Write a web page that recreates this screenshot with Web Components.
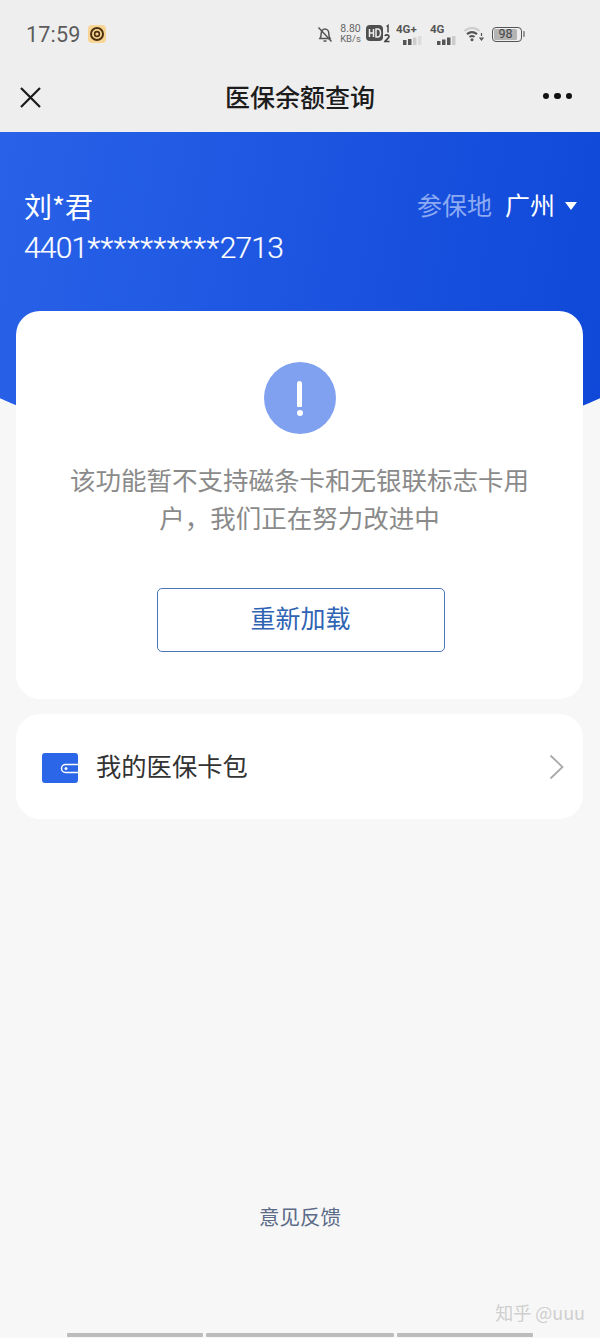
<!DOCTYPE html>
<html lang="zh">
<head>
<meta charset="utf-8">
<title>医保余额查询</title>
<style>
  html, body { margin: 0; padding: 0; }
  body {
    width: 600px;
    height: 1338px;
    overflow: hidden;
    background: #f7f7f7;
    font-family: "Noto Sans CJK SC", Roboto, sans-serif;
    display: flex;
    flex-direction: column;
  }
</style>
</head>
<body>
<status-bar time="17:59"></status-bar>
<nav-bar>医保余额查询</nav-bar>
<insured-hero name="刘*君" card-no="4401**********2713" city="广州"></insured-hero>
<notice-card action="重新加载">该功能暂不支持磁条卡和无银联标志卡用户，我们正在努力改进中</notice-card>
<wallet-row>我的医保卡包</wallet-row>
<feedback-link>意见反馈</feedback-link>
<gesture-bar></gesture-bar>

<script>
// Status bar
class StatusBar extends HTMLElement {
  constructor() {
    super();
    this.attachShadow({ mode: 'open' });
  }
  connectedCallback() {
    this.shadowRoot.innerHTML = `
      <style>
        :host { display: flex; align-items: center; height: 68px; padding: 0 75px 0 26px; background: #eeeeee; color: #555; font-family: Roboto, sans-serif; }
        .time { font-size: 21.5px; letter-spacing: .2px; color: #5c5c5c; width: 62px; }
        .right { margin-left: auto; display: flex; align-items: center; height: 24px; }
        .speed { font-size: 10.5px; line-height: 10px; text-align: center; margin-left: 6px; width: 23px; color: #666; }
        .speed small { font-size: 9.5px; }
        .net { display: flex; flex-direction: column; align-items: flex-start; width: 27px; font-size: 11.5px; font-weight: 700; line-height: 11px; color: #555; }
        svg { display: block; flex: none; }
        .batt { width: 30px; height: 15px; border: 1.500px solid #555; border-radius: 4px; box-sizing: border-box; padding: 1px; position: relative; margin: 0 3px 0 8px; }
        .batt i { display: block; width: 23px; height: 100%; border-radius: 1.500px; background: #b4b4b4; font: 400 12.500px/10px Roboto, sans-serif; color: #444; text-align: center; }
        .batt::after { content: ""; position: absolute; right: -4px; top: 3px; width: 2px; height: 6px; background: #999; border-radius: 0 1px 1px 0; }
      </style>
      <span class="time">${this.getAttribute('time')}</span>
      <svg width="18" height="18" viewBox="0 0 18 18">
        <rect width="18" height="18" rx="4" fill="#f8d594"/>
        <circle cx="9" cy="9" r="6" fill="none" stroke="#4a3011" stroke-width="2"/>
        <circle cx="9" cy="9" r="2.400" fill="none" stroke="#4a3011" stroke-width="1.600"/>
      </svg>
      <div class="right">
        <svg width="16" height="17" viewBox="0 0 16 17" fill="none" stroke="#555" stroke-width="1.500">
          <path d="M3 12.500c1-1.500 1.200-3 1.200-5 0-2.600 1.700-4.500 3.800-4.500s3.800 1.900 3.800 4.500c0 2 .2 3.500 1.200 5z"/>
          <path d="M6.500 15h3M1.500 1.500l13 14"/>
        </svg>
        <div class="speed">8.80<br><small>KB/s</small></div>
        <svg width="25" height="20" viewBox="0 0 25 20" style="margin-left:4px">
          <rect x="0" y="1" width="17" height="16" rx="4" fill="#4f4f4f"/>
          <path d="M3.500 5v8M3.500 9h4M7.500 5v8M10 5v8h1.500c2 0 3-1.500 3-4s-1-4-3-4z" fill="none" stroke="#eee" stroke-width="1.500"/>
          <path d="M20.500 2.500l1.500-1v7" fill="none" stroke="#444" stroke-width="1.500"/>
          <path d="M19 12c.3-1.500 4-1.500 4 .5 0 1.500-3 3-4 5h4.500" fill="none" stroke="#444" stroke-width="1.700"/>
        </svg>
        <div class="net" style="margin-left:5px">4G+
          <svg width="27" height="9" viewBox="0 0 27 9" style="margin-top:1px"><rect x="7" y="4" width="3.500" height="5" fill="#555"/><rect x="12" y="3" width="3.500" height="6" fill="#555"/><rect x="17" y="1.500" width="3.500" height="7.500" fill="#ccc"/><rect x="22" y="0" width="3.500" height="9" fill="#ddd"/></svg>
        </div>
        <div class="net" style="margin-left:7px">4G
          <svg width="27" height="9" viewBox="0 0 27 9" style="margin-top:1px"><rect x="7" y="5" width="3.500" height="4" fill="#555"/><rect x="12" y="3.500" width="3.500" height="5.500" fill="#555"/><rect x="17" y="1.500" width="3.500" height="7.500" fill="#555"/><rect x="22" y="0" width="3.500" height="9" fill="#ccc"/></svg>
        </div>
        <svg width="20" height="15" viewBox="0 0 20 15" fill="none" style="margin-left:7px">
          <path d="M0.500 4c4.500-4 10.500-4 15 0" stroke="#ccc" stroke-width="2.200"/>
          <path d="M3 7.200c3-2.500 7-2.500 10 0" stroke="#555" stroke-width="2.200"/>
          <path d="M5.500 10c1.600-1.200 3.400-1.200 5 0" stroke="#555" stroke-width="2"/>
          <circle cx="8" cy="12.800" r="1.500" fill="#555"/>
          <path d="M17.500 6v3M16 11h3l-1.500 2z" stroke="#555" stroke-width="1.200"/>
        </svg>
        <div class="batt"><i>98</i></div>
      </div>
    `;
  }
}
customElements.define('status-bar', StatusBar);

// Title bar
class NavBar extends HTMLElement {
  constructor() {
    super();
    this.attachShadow({ mode: 'open' }).innerHTML = `
      <style>
        :host { display: grid; grid-template-columns: 100px 1fr 100px; align-items: center; height: 64px; background: #eeeeee; color: #1c1c1c; }
        .close { padding-left: 20px; }
        h1 { margin: 0 0 8px; text-align: center; font-size: 25px; font-weight: 500; line-height: 50px; }
        .more { display: flex; justify-content: flex-end; gap: 5px; padding: 0 28px 8px 0; }
        .more i { width: 6.500px; height: 6.500px; border-radius: 50%; background: #111; }
        svg { display: block; margin-bottom: 6px; }
      </style>
      <div class="close">
        <svg width="21" height="21" viewBox="0 0 21 21" fill="none" stroke="#1a1a1a" stroke-width="2.200"><path d="M1 1l19 19M20 1L1 20"/></svg>
      </div>
      <h1><slot></slot></h1>
      <div class="more"><i></i><i></i><i></i></div>
    `;
  }
}
customElements.define('nav-bar', NavBar);

// Blue header with the insured person
class InsuredHero extends HTMLElement {
  constructor() {
    super();
    this.attachShadow({ mode: 'open' });
  }
  connectedCallback() {
    // digits sit closer together than the stars in the card number
    const cardNo = this.getAttribute('card-no').replace(/\*+/, '<span class="stars">$&</span>');
    this.shadowRoot.innerHTML = `
      <style>
        :host { display: block; position: relative; height: 179px; color: #fff; }
        .bg { position: absolute; left: 0; top: 0; width: 600px; height: 327px; background: linear-gradient(100deg, #2962e8 0%, #0f47d8 100%); clip-path: ellipse(500px 304px at 300px 23px); }
        .row { position: relative; display: flex; justify-content: space-between; padding: 55px 23px 0 24px; }
        .name { font-size: 28px; line-height: 38px; }
        .no { font: 300 30px/42px Roboto, sans-serif; margin-top: 2px; letter-spacing: -.8px; -webkit-text-stroke: .2px #fff; }
        .stars { letter-spacing: .5px; }
        .city { display: flex; align-items: center; height: 36px; font-size: 25px; margin-top: -1px; }
        .label { color: #8caaf2; margin-right: 13px; }
        .arrow { width: 0; height: 0; margin: 4px 0 0 10px; border: 6.500px solid transparent; border-top: 8px solid #fff; border-bottom: 0; }
      </style>
      <div class="bg"></div>
      <div class="row">
        <div>
          <div class="name">${this.getAttribute('name')}</div>
          <div class="no">${cardNo}</div>
        </div>
        <div class="city"><span class="label">参保地</span><span>${this.getAttribute('city')}</span><span class="arrow"></span></div>
      </div>
    `;
  }
}
customElements.define('insured-hero', InsuredHero);

// Message card with the reload button
class NoticeCard extends HTMLElement {
  constructor() {
    super();
    this.attachShadow({ mode: 'open' });
  }
  connectedCallback() {
    this.shadowRoot.innerHTML = `
      <style>
        :host { display: flex; flex-direction: column; align-items: center; position: relative; box-sizing: border-box; width: 567px; height: 388px; margin-left: 16px; padding-top: 51px; background: #fff; border-radius: 24px; }
        .icon { width: 72px; height: 72px; border-radius: 50%; background: #80a1ef; display: flex; align-items: center; justify-content: center; flex-direction: column; gap: 3px; }
        .icon b { width: 5px; height: 26px; background: #fff; border-radius: 2.500px 2.500px 1px 1px; }
        .icon i { width: 6px; height: 6px; background: #fff; border-radius: 50%; }
        p { width: 470px; margin: 26px 0 0; text-align: center; color: #8a8a8a; font-size: 25.500px; line-height: 38px; }
        button { width: 288px; height: 64px; margin: 52px 0 0 2px; background: #fff; border: 1.200px solid #4a76b8; border-radius: 5px; color: #2f63b4; font: 400 25px/50px "Noto Sans CJK SC", sans-serif; padding: 0 0 6px; }
      </style>
      <div class="icon"><b></b><i></i></div>
      <p><slot></slot></p>
      <button>${this.getAttribute('action')}</button>
    `;
  }
}
customElements.define('notice-card', NoticeCard);

// Wallet link row
class WalletRow extends HTMLElement {
  constructor() {
    super();
    this.attachShadow({ mode: 'open' }).innerHTML = `
      <style>
        :host { display: flex; align-items: center; position: relative; box-sizing: border-box; width: 567px; height: 105px; margin: 15px 0 0 16px; padding: 0 19px 0 26px; background: #fff; border-radius: 24px; color: #333; font-size: 25.300px; }
        .label { margin: 0 0 4px 18px; flex: 1; }
        svg { display: block; flex: none; }
      </style>
      <svg width="36" height="33" viewBox="0 0 36 33">
        <rect width="36" height="30" y="3" rx="3" fill="#2b65e8"/>
        <path d="M36 14.500H23.500a4 4 0 0 0 0 8H36" fill="none" stroke="#fff" stroke-width="1.500"/>
        <circle cx="24" cy="18.500" r="1.500" fill="#fff"/>
      </svg>
      <span class="label"><slot></slot></span>
      <svg width="15" height="26" viewBox="0 0 15 26" fill="none" stroke="#aaa" stroke-width="1.800"><path d="M1.500 1.500L13.500 13 1.500 24.500"/></svg>
    `;
  }
}
customElements.define('wallet-row', WalletRow);

// Feedback link at the bottom
class FeedbackLink extends HTMLElement {
  constructor() {
    super();
    this.attachShadow({ mode: 'open' }).innerHTML = `
      <style>
        :host { display: block; margin-top: auto; padding-bottom: 102px; text-align: center; color: #5b6b88; font-size: 20.500px; line-height: 30px; }
      </style>
      <slot></slot>
    `;
  }
}
customElements.define('feedback-link', FeedbackLink);

// Gesture bar and the watermark above it
class GestureBar extends HTMLElement {
  constructor() {
    super();
    this.attachShadow({ mode: 'open' }).innerHTML = `
      <style>
        :host { display: flex; justify-content: center; gap: 3px; position: relative; height: 5px; margin-bottom: 0; }
        i { height: 4px; background: #bcbcbc; border-radius: 1px; }
        .mark { position: absolute; right: 15px; bottom: 14px; color: #cfcfcf; font-size: 18px; line-height: 24px; white-space: nowrap; }
      </style>
      <i style="width:136px"></i><i style="width:188px"></i><i style="width:136px"></i>
      <div class="mark">知乎 @uuu</div>
    `;
  }
}
customElements.define('gesture-bar', GestureBar);
</script>
</body>
</html>
